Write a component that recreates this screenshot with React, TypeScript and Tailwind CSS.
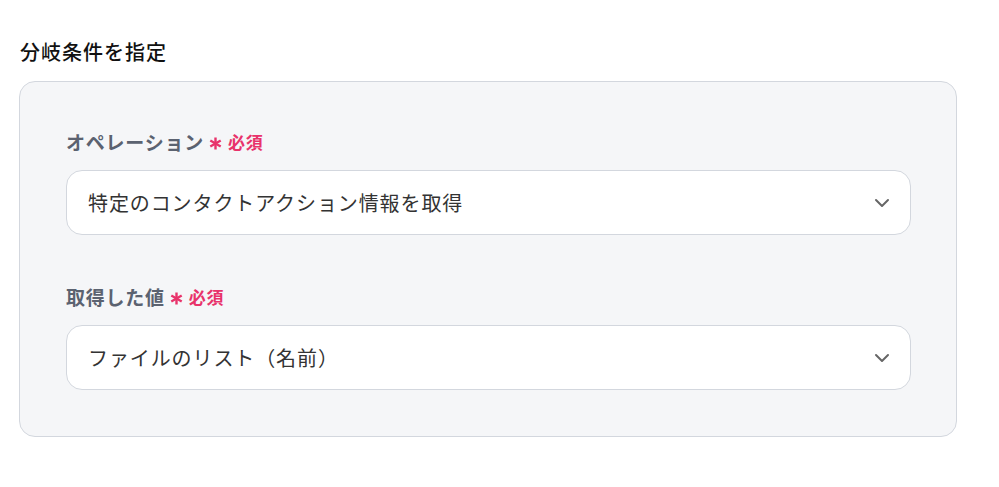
import React from "react";

const font = { fontFamily: '"Noto Sans CJK JP", "Noto Sans", sans-serif' };

function Chevron() {
  return (
    <svg width="16" height="10" viewBox="0 0 16 10" fill="none">
      <path d="M2 2l6 6 6-6" stroke="#666" strokeWidth="2" strokeLinecap="round" strokeLinejoin="round" />
    </svg>
  );
}

function Asterisk() {
  return (
    <svg width="13" height="13" viewBox="0 0 13 13" fill="none" className="mt-[2px]">
      <g stroke="#e8336b" strokeWidth="2.4" strokeLinecap="butt">
        <path d="M6.5 0.5v12" />
        <path d="M1.3 3.5l10.4 6" />
        <path d="M1.3 9.5l10.4-6" />
      </g>
    </svg>
  );
}

function Field({ label, value }: { label: string; value: string }) {
  return (
    <div className="flex flex-col">
      <div className="flex items-center h-[28px] mb-[14px]">
        <span className="text-[19px] font-bold text-[#5b6270] tracking-[0.04em]">{label}</span>
        <span className="ml-[5px] flex items-center">
          <Asterisk />
        </span>
        <span className="ml-[6px] text-[17px] font-bold text-[#e8336b] tracking-[0.04em]">必須</span>
      </div>
      <div className="h-[65px] bg-white border border-[#d3d7de] rounded-[16px] flex items-center justify-between pl-[21px] pr-[20px]">
        <span className="text-[20px] text-[#333] tracking-[0.045em]">{value}</span>
        <Chevron />
      </div>
    </div>
  );
}

export default function App() {
  return (
    <div style={font} className="w-[999px] h-[487px] bg-white pt-[38px] pl-[19px] pr-[42px]">
      <h2 className="text-[20px] font-medium text-[#111] h-[28px] leading-[28px] mb-[15px] pl-[1px] tracking-[0.05em]">
        分岐条件を指定
      </h2>
      <div className="bg-[#f5f6f8] border border-[#d3d7de] rounded-[16px] pl-[46px] pr-[45px] pt-[46px] pb-[46px] flex flex-col gap-[48px]">
        <Field label="オペレーション" value="特定のコンタクトアクション情報を取得" />
        <Field label="取得した値" value="ファイルのリスト（名前）" />
      </div>
    </div>
  );
}
